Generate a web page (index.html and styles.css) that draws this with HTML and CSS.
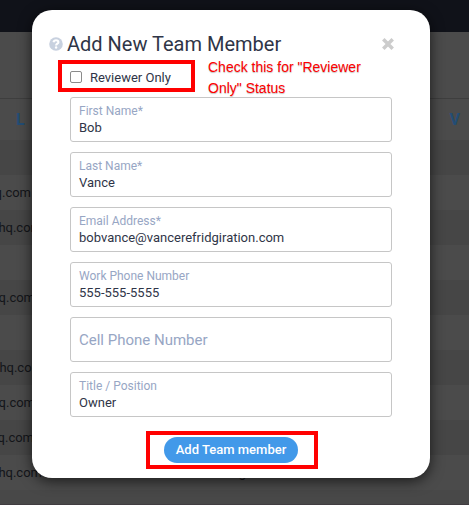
FILE: index.html
```html
<!DOCTYPE html>
<html lang="en">

<head>
  <meta charset="UTF-8">
  <meta name="viewport" content="width=device-width, initial-scale=1.0">
  <title>Add New Team Member</title>
  <link rel="stylesheet" href="styles.css">
</head>

<body>
  <div class="page">
    <div class="topbar"></div>
    <div class="toolbar"></div>
    <div class="table-head"><span>L</span><span>V</span></div>
    <div class="row"></div>
    <div class="row"><span class="mail w31">q.com</span></div>
    <div class="row"><span class="mail w41">hq.com</span></div>
    <div class="row"></div>
    <div class="row"><span class="mail w34">q.com</span></div>
    <div class="row"></div>
    <div class="row"><span class="mail w43">rhq.com</span></div>
    <div class="row"><span class="mail w34">q.com</span></div>
    <div class="row"><span class="mail w33">q.com</span></div>
    <div class="row"><span class="mail w41">hq.com</span><span class="role">Manager</span></div>
    <div class="row last"></div>
  </div>

  <div class="modal">
    <div class="modal-header">
      <svg class="help" viewBox="0 0 14 14">
        <circle cx="7" cy="7" r="6.8" fill="#c8d1df" />
        <path d="M4.5 5.3C4.8 3.9 5.8 3.3 7 3.3c1.4 0 2.4.7 2.4 1.9C9.4 6.7 7.1 6.6 7.1 8.4" fill="none" stroke="#fff" stroke-width="2.1" />
        <circle cx="7.1" cy="10.5" r="1.2" fill="#fff" />
      </svg>
      <h1>Add New Team Member</h1>
      <svg class="close" viewBox="0 0 12 12">
        <path d="M1.3 1.3l9.4 9.4M10.7 1.3l-9.4 9.4" stroke="#ccc" stroke-width="3.5" />
      </svg>
    </div>

    <div class="reviewer">
      <label class="check marked"><input type="checkbox"><span>Reviewer Only</span></label>
      <p class="note">Check this for "Reviewer<br>Only" Status</p>
    </div>

    <div class="fields">
      <div class="field"><label>First Name*</label><span>Bob</span></div>
      <div class="field"><label>Last Name*</label><span>Vance</span></div>
      <div class="field"><label>Email Address*</label><span>bobvance@vancerefridgiration.com</span></div>
      <div class="field"><label>Work Phone Number</label><span>555-555-5555</span></div>
      <div class="field empty"><label>Cell Phone Number</label></div>
      <div class="field"><label>Title / Position</label><span>Owner</span></div>
    </div>

    <div class="submit marked"><button>Add Team member</button></div>
  </div>
</body>

</html>
```
FILE: styles.css
```css
* {
  box-sizing: border-box;
}

body {
  margin: 0;
  height: 505px;
  overflow: hidden;
  font-family: Roboto, sans-serif;
  color: #2f3547;
}

.page {
  height: 505px;
  overflow: hidden;
  background: #4b4b4b;
}

.topbar {
  height: 32px;
  background: #101219;
}

.toolbar {
  height: 67px;
  border-bottom: 1px solid #3e3e3e;
}

.table-head {
  display: flex;
  justify-content: space-between;
  align-items: center;
  height: 41px;
  padding: 0 9px 1px 16px;
  font-size: 16px;
  font-weight: 700;
  color: #234d75;
}

.row {
  display: flex;
  align-items: center;
  height: 35px;
  font-size: 13px;
  color: #131519;
}

.row:nth-child(even) {
  background: #464646;
}

.row.last {
  height: 15px;
  background: #484848;
  border-bottom: 1px solid #403c40;
}

.mail {
  display: flex;
  flex: none;
  justify-content: flex-end;
}

.w31 { width: 31px; }
.w33 { width: 34px; }
.w34 { width: 35px; }
.w41 { width: 42px; }
.w43 { width: 43px; }

.role {
  margin-left: 164px;
}

.modal {
  position: absolute;
  top: 10px;
  left: 32px;
  width: 398px;
  height: 468px;
  border-radius: 20px;
  background: #fff;
  box-shadow: 0 3px 14px rgba(0, 0, 0, 0.65);
}

.modal-header {
  display: flex;
  align-items: center;
  height: 50px;
  padding: 17px 36px 0 17px;
}

.help {
  width: 14px;
  height: 14px;
  margin-right: 4px;
}

h1 {
  margin: 0;
  font-size: 20px;
  font-weight: 400;
  line-height: 24px;
  white-space: nowrap;
}

.close {
  width: 12px;
  height: 12px;
  margin-left: auto;
}

.marked {
  border: 4px solid #f00;
}

.reviewer {
  display: flex;
  height: 37px;
  padding-left: 26px;
}

.check {
  display: flex;
  align-items: center;
  width: 137px;
  height: 32px;
  padding: 2px 0 0 8px;
  font-size: 13px;
}

.check input {
  appearance: none;
  width: 12px;
  height: 12px;
  margin: 0 8px 0 0;
  border: 1px solid #8b8b8b;
  border-radius: 2px;
  background: #fff;
}

.note {
  margin: -3px 0 0 13px;
  font-family: "Liberation Sans", Arial, sans-serif;
  font-size: 14px;
  line-height: 21px;
  color: #f00;
  white-space: nowrap;
  text-shadow: 0 1px 1px rgba(0, 0, 0, 0.25);
}

.fields {
  display: flex;
  flex-direction: column;
  gap: 10px;
  padding: 0 38px;
}

.field {
  display: flex;
  flex-direction: column;
  height: 45px;
  padding: 5px 8px 0;
  border: 1px solid #c6c6c6;
  border-radius: 3px;
  font-size: 13px;
  line-height: 17px;
}

.field label {
  font-size: 12px;
  line-height: 16px;
  color: #97a6c4;
}

.field.empty {
  justify-content: center;
  padding-top: 0;
}

.field.empty label {
  font-size: 15px;
}

.submit {
  display: flex;
  align-items: center;
  justify-content: center;
  width: 172px;
  height: 38px;
  margin: 14px 0 0 114px;
}

.submit button {
  width: 134px;
  height: 26px;
  margin-right: 2px;
  padding: 0 0 2px;
  border: 0;
  border-radius: 13px;
  background: #4299e9;
  color: #fff;
  font-family: Roboto, sans-serif;
  font-size: 13px;
  font-weight: 500;
}
```
